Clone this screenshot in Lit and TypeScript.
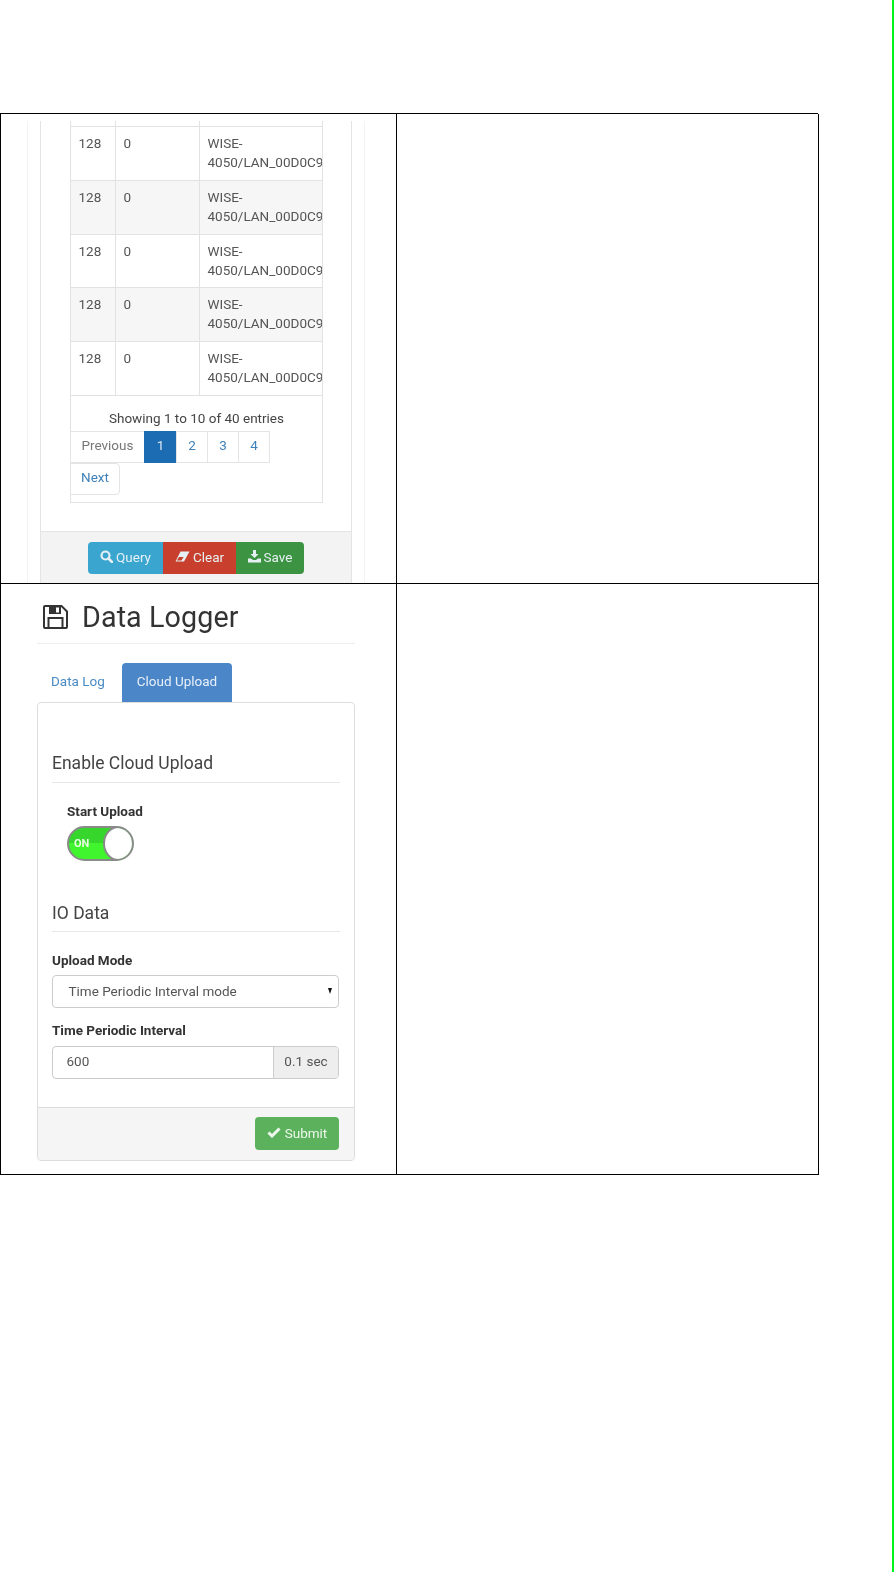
import { LitElement, html, css } from "lit";
import { customElement } from "lit/decorators.js";

const rows = [0, 1, 2, 3, 4];

@customElement("app-root")
export class AppRoot extends LitElement {
  static styles = css`
    :host { display: block; position: relative; width: 894px; height: 1572px; background: #fff; overflow: hidden;
      font-family: Roboto, "Liberation Sans", sans-serif; color: #333; }
    .page { padding-top: 113px; display: block; }
    .green { position: absolute; top: 0; right: 0; width: 2px; height: 1572px; background: #00f51a; }
    .outer { display: grid; grid-template-columns: 396px 422px; width: 818px; border-top: 1px solid #000; border-left: 1px solid #000; box-sizing: border-box; }
    .cell { border-right: 1px solid #000; border-bottom: 1px solid #000; box-sizing: border-box; overflow: hidden; }
    .c1 { height: 470px; }
    .c2 { height: 591px; }

    /* first shot */
    .shot1 { filter: blur(0.35px); margin: 7px 0 0 26px; width: 338px; height: 462px; border-left: 1px solid #f3f3f3; border-right: 1px solid #f3f3f3; box-sizing: border-box; padding: 0 12px; }
    .panel1 { height: 462px; border-left: 1px solid #e4e4e4; border-right: 1px solid #e4e4e4; display: flex; flex-direction: column; box-sizing: border-box; }
    .body1 { flex: 1; padding: 0 29px; }
    .tbl { width: 253px; border: 1px solid #e2e2e2; border-top: 0; box-sizing: border-box; height: 382px; }
    .stub { height: 5px; border-bottom: 1.5px solid #e2e2e2; display: grid; grid-template-columns: 45px 84px 1fr; }
    .stub i { border-right: 1.5px solid #e2e2e2; }
    .stub i:last-child { border: 0; }
    .row { display: grid; grid-template-columns: 45px 84px 1fr; height: 53.8px; border-bottom: 1.5px solid #e2e2e2; box-sizing: border-box; font-size: 13.5px; line-height: 19px; color: #555; }
    .row.alt { background: #f6f6f6; }
    .row > div { padding: 7px 0 0 7.5px; border-right: 1.5px solid #e2e2e2; white-space: nowrap; overflow: hidden; }
    .row > div:last-child { border: 0; }
    .info { text-align: center; font-size: 13.5px; color: #444; padding-top: 13px; line-height: 18px; height: 18px; }
    .pager { display: flex; flex-wrap: wrap; font-size: 13.5px; margin: 4px 0 0 -1px; width: 230px; }
    .pg { height: 32px; border: 1px solid #e4e4e4; box-sizing: border-box; margin-right: -1px; padding-bottom: 3px; display: flex; align-items: center; justify-content: center; color: #3f80b8; background: #fff; }
    .pg.prev { width: 75px; color: #777; }
    .pg.on { width: 33px; background: #1b6cb2; border-color: #1b6cb2; color: #d8e6f2; }
    .pg.n { width: 32px; }
    .pg.next { width: 50px; border-radius: 0 4px 4px 0; }
    .foot1 { height: 52px; background: #f3f3f3; border-top: 1px solid #e4e4e4; box-sizing: border-box; display: flex; justify-content: center; padding-top: 10px; }
    .btn { height: 32px; box-sizing: border-box; padding-bottom: 3px; display: flex; align-items: center; justify-content: center; gap: 3px; color: #e6f0f4; font-size: 13.5px; }
    .btn svg { display: block; }
    .q { width: 75px; background: #3aa6d0; border-radius: 4px 0 0 4px; }
    .cl { width: 73px; background: #c8402d; }
    .s { width: 68px; background: #3c9442; border-radius: 0 4px 4px 0; }

    /* second shot */
    .shot2 { filter: blur(0.25px); padding: 0 0 0 36px; width: 318px; }
    .h { display: flex; align-items: center; gap: 14px; height: 52px; padding: 7px 0 0 6px; border-bottom: 1px solid #eee; font-size: 28.7px; color: #333; letter-spacing: 0.1px; }
    .tabs { display: flex; align-items: stretch; margin-top: 19px; height: 39px; font-size: 13.5px; }
    .tab { display: flex; align-items: center; color: #4a8bc4; padding: 0 14px 3px; width: 85px; box-sizing: border-box; }
    .tab.act { width: 110px; background: #4a86c8; color: #e8f0f8; border-radius: 4px 4px 0 0; justify-content: center; padding: 0 0 3px; }
    .panel2 { width: 318px; height: 459px; border: 1px solid #ddd; border-radius: 4px; box-sizing: border-box; display: flex; flex-direction: column; }
    .pb { flex: 1; padding: 0 14px; }
    .sec { font-size: 17.5px; line-height: 22px; color: #444; border-bottom: 1px solid #e8e8e8; height: 30px; }
    .s1 { margin-top: 49px; }
    .s2 { margin-top: 41px; height: 29px; }
    label { display: block; font-size: 13.5px; font-weight: 700; color: #333; line-height: 16px; }
    .sw-wrap { padding: 20px 0 0 15px; }
    .toggle { position: relative; width: 67px; height: 35px; margin-top: 7px; border: 2px solid #8a8a8a; border-radius: 18px; box-sizing: border-box; background: linear-gradient(#36d62c 0 50%, #40f42e 50%); overflow: hidden; color: #e8ffe0; font-size: 11px; font-weight: 700; line-height: 31px; padding-left: 5px; }
    .knob { position: absolute; right: -2px; top: -2px; width: 31px; height: 35px; border-radius: 50%; background: #fff; border: 2px solid #8a8a8a; box-sizing: border-box; }
    .mode { margin-top: 20px; }
    .sel { margin-top: 7px; width: 287px; height: 33px; border: 1px solid #ccc; border-radius: 4px; box-sizing: border-box; display: flex; align-items: center; justify-content: space-between; padding: 0 6px 2px 15.500px; font-size: 13.5px; color: #555; }
    .caret { width: 0; height: 0; border-left: 2.5px solid transparent; border-right: 2.5px solid transparent; border-top: 6px solid #111; }
    .t { margin-top: 14px; }
    .ig { margin-top: 8px; width: 287px; height: 33px; border: 1px solid #ccc; border-radius: 4px; box-sizing: border-box; display: flex; font-size: 13.5px; color: #555; }
    .ig .v { flex: 1; padding-left: 13.500px; line-height: 29px; }
    .ig .u { width: 65px; background: #eee; border-left: 1px solid #ccc; text-align: center; line-height: 29px; box-sizing: border-box; border-radius: 0 3px 3px 0; }
    .foot2 { height: 53px; background: #f5f5f5; border-top: 1px solid #ddd; box-sizing: border-box; display: flex; justify-content: flex-end; padding: 9px 15px 0 0; border-radius: 0 0 4px 4px; }
    .sub { width: 84px; height: 33px; background: #5cb25c; border-radius: 4px; color: #eef7ee; font-size: 13.5px; display: flex; align-items: center; justify-content: center; gap: 4px; box-sizing: border-box; padding-bottom: 2px; }
  `;

  render() {
    const row = (i: number) => html`
      <div class="row ${i % 2 ? "alt" : ""}"><div>128</div><div>0</div><div>WISE-<br />4050/LAN_00D0C9</div></div>`;
    return html`
      <div class="green"></div>
      <div class="page">
        <div class="outer">
          <div class="cell c1">
            <div class="shot1">
              <div class="panel1">
                <div class="body1">
                  <div class="tbl">
                    <div class="stub"><i></i><i></i><i></i></div>
                    ${rows.map(row)}
                    <div class="info">Showing 1 to 10 of 40 entries</div>
                    <div class="pager">
                      <div class="pg prev">Previous</div>
                      <div class="pg on">1</div>
                      <div class="pg n">2</div>
                      <div class="pg n">3</div>
                      <div class="pg n">4</div>
                      <div class="pg next">Next</div>
                    </div>
                  </div>
                </div>
                <div class="foot1">
                  <div class="btn q">
                    <svg width="13" height="13" viewBox="0 0 13 13"><circle cx="5.500" cy="5.500" r="4" fill="none" stroke="currentColor" stroke-width="2.200"/><path d="M8.500 8.500L12 12" stroke="currentColor" stroke-width="2.600" stroke-linecap="round"/></svg>
                    Query
                  </div>
                  <div class="btn cl">
                    <svg width="15" height="11" viewBox="0 0 15 11"><path d="M5.500 0.500H14.500L9 10.500H0.500Z" fill="currentColor"/><path d="M4 6L1.800 9.500H6.500L8.600 6Z" fill="#c8402d"/></svg>
                    Clear
                  </div>
                  <div class="btn s">
                    <svg width="13" height="13" viewBox="0 0 13 13"><path d="M5 0H8V4H10.500L6.500 8L2.500 4H5Z M0 8.500H3L5 10H8L10 8.500H13V12.500H0Z" fill="currentColor"/></svg>
                    Save
                  </div>
                </div>
              </div>
            </div>
          </div>
          <div class="cell c1"></div>
          <div class="cell c2">
            <div class="shot2">
              <div class="h">
                <svg width="25" height="24" viewBox="0 0 25 24"><path d="M1 2Q1 1 2 1H18.500L24 6.500V22Q24 23 23 23H2Q1 23 1 22Z" fill="none" stroke="#333" stroke-width="2"/><path d="M6 1H18V9H6Z" fill="#333"/><path d="M13 2.500H16V7.500H13Z" fill="#fff"/><path d="M5.500 23V13H19.500V23" fill="none" stroke="#333" stroke-width="2"/></svg>
                <span>Data Logger</span>
              </div>
              <div class="tabs">
                <div class="tab">Data Log</div>
                <div class="tab act">Cloud Upload</div>
              </div>
              <div class="panel2">
                <div class="pb">
                  <div class="sec s1">Enable Cloud Upload</div>
                  <div class="sw-wrap">
                    <label>Start Upload</label>
                    <div class="toggle">ON<div class="knob"></div></div>
                  </div>
                  <div class="sec s2">IO Data</div>
                  <label class="mode">Upload Mode</label>
                  <div class="sel"><span>Time Periodic Interval mode</span><span class="caret"></span></div>
                  <label class="t">Time Periodic Interval</label>
                  <div class="ig"><div class="v">600</div><div class="u">0.1 sec</div></div>
                </div>
                <div class="foot2">
                  <div class="sub">
                    <svg width="14" height="11" viewBox="0 0 14 11"><path d="M1.500 5.500L5 9L12.500 1.500" fill="none" stroke="currentColor" stroke-width="3"/></svg>
                    Submit
                  </div>
                </div>
              </div>
            </div>
          </div>
          <div class="cell c2"></div>
        </div>
      </div>
    `;
  }
}
